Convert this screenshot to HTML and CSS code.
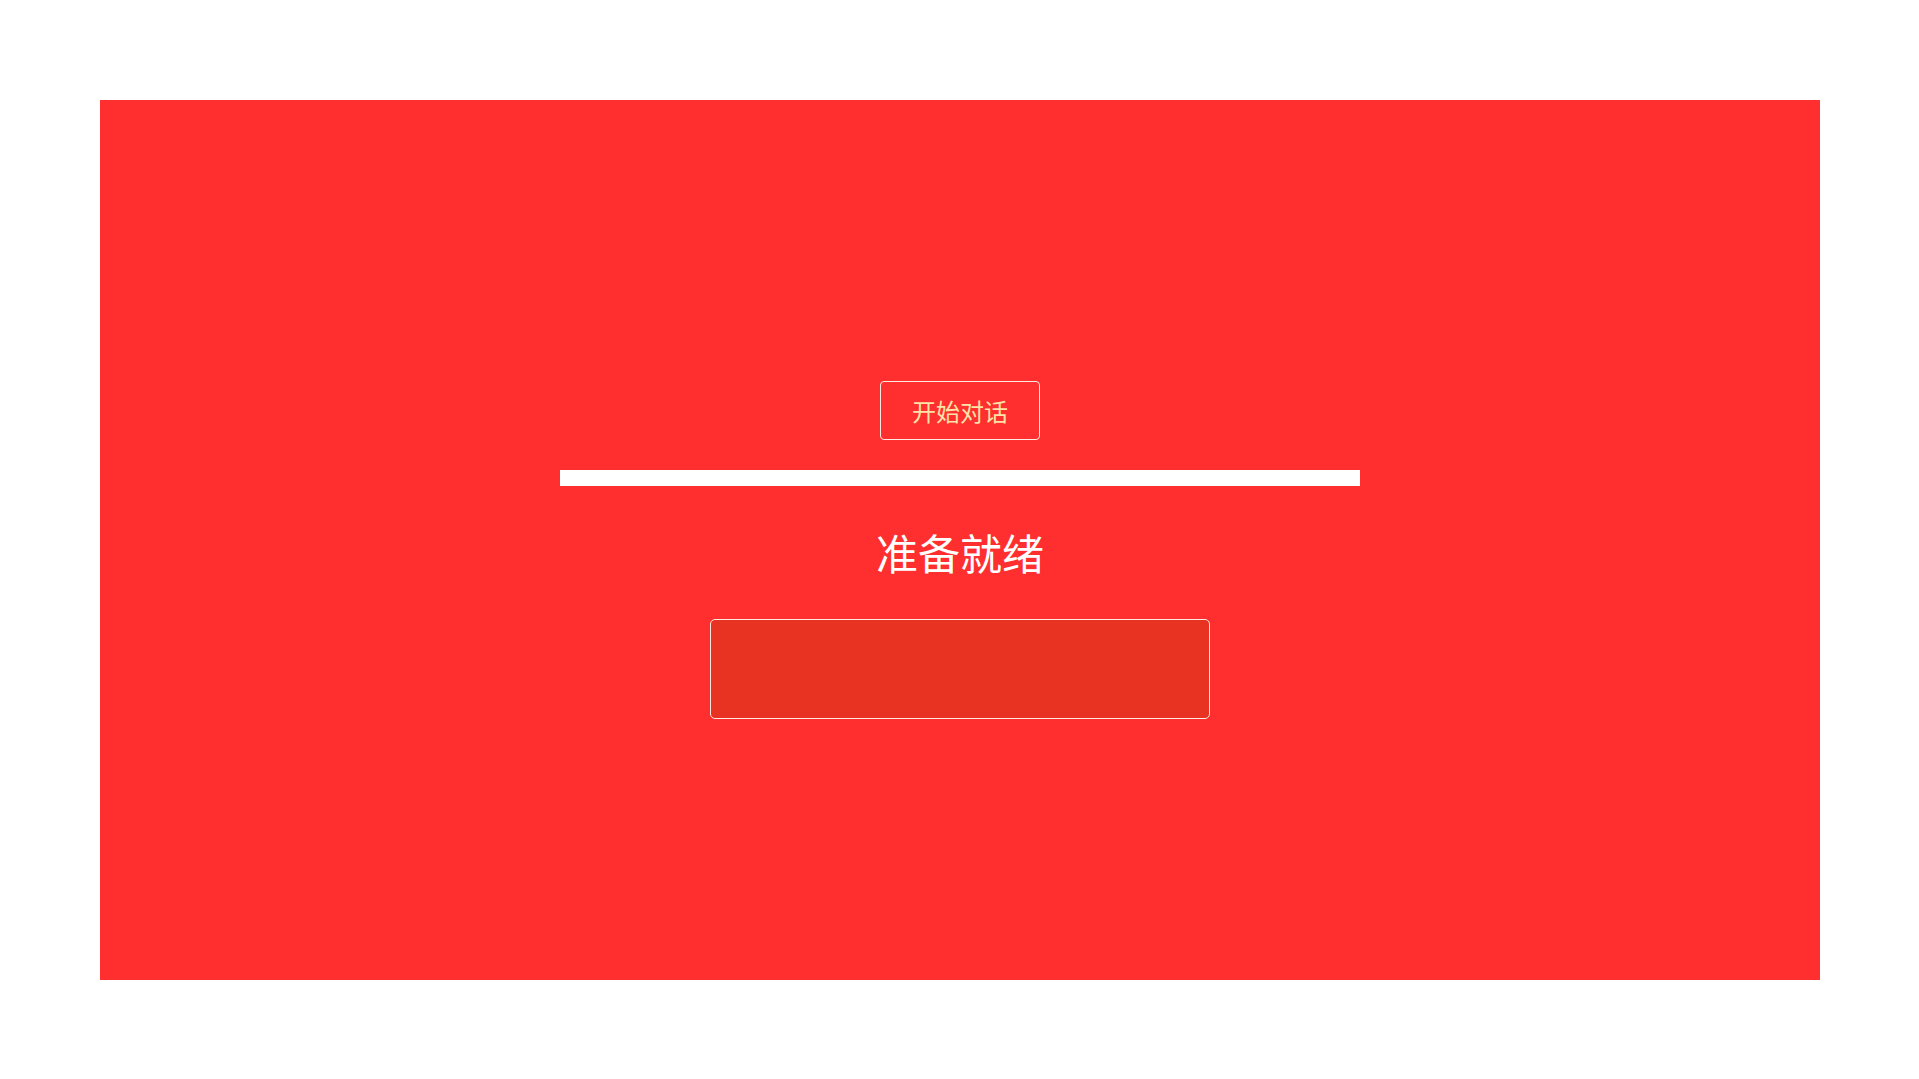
FILE: index.html
```html
<!DOCTYPE html>
<html lang="zh-CN">
<head>
<meta charset="utf-8">
<title>开始对话</title>
<link rel="stylesheet" href="styles.css">
</head>
<body>
<main class="stage">
  <button class="start-btn" type="button">开始对话</button>
  <div class="bar"></div>
  <h1 class="status">准备就绪</h1>
  <div class="panel"></div>
</main>
</body>
</html>
```

FILE: styles.css
```css
html, body {
  margin: 0;
  padding: 0;
  background: #ffffff;
}
body {
  padding: 100px 99px 99px 100px;
  font-family: "Noto Sans CJK SC", "Noto Sans", sans-serif;
}
.stage {
  width: 1720px;
  height: 880px;
  box-sizing: border-box;
  background: #ff2f2f;
  display: flex;
  flex-direction: column;
  align-items: center;
  padding-top: 281px;
}
.start-btn {
  width: 160px;
  height: 59px;
  box-sizing: border-box;
  background: transparent;
  border: 1px solid #ffe9e0;
  border-radius: 4px;
  color: #fde3a7;
  font-family: "Noto Sans CJK SC", sans-serif;
  font-size: 24px;
  line-height: 1;
  padding: 0;
}
.bar {
  width: 800px;
  height: 16px;
  background: #ffffff;
  margin-top: 30px;
}
.status {
  margin: 45px 0 0;
  font-size: 42px;
  font-weight: 400;
  line-height: 1;
  color: #ffffff;
  height: 42px;
}
.panel {
  width: 500px;
  height: 100px;
  box-sizing: border-box;
  margin-top: 46px;
  background: #e83222;
  border: 1px solid #ffe9e0;
  border-radius: 5px;
}
```
